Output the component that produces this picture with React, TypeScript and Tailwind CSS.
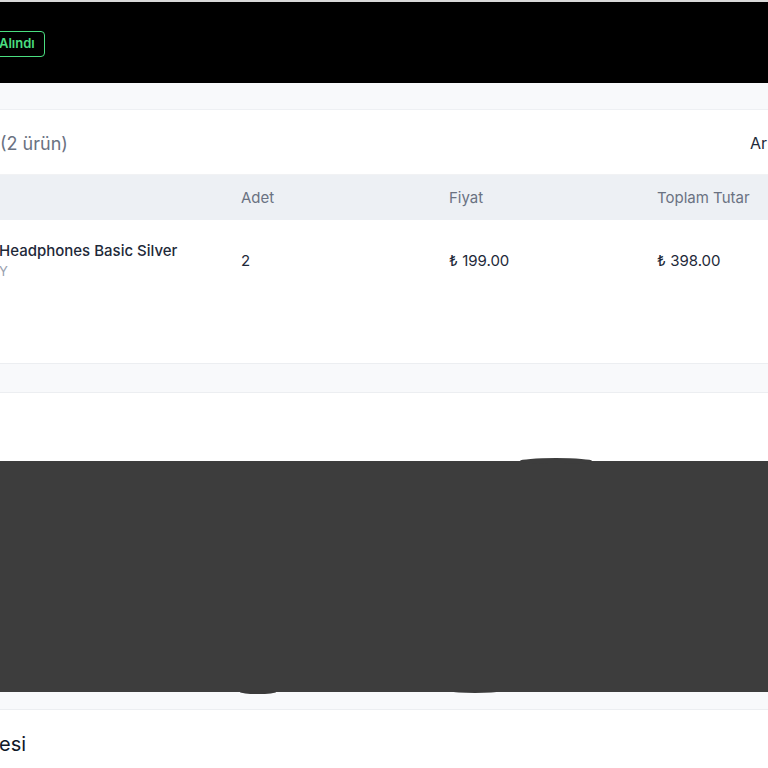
import React from 'react';

const items = [
  { name: 'Headphones Basic Silver', sub: 'Y', qty: 2, price: '₺ 199.00', total: '₺ 398.00' },
];

export default function App() {
  return (
    <div className="w-[768px] h-[768px] overflow-hidden bg-white font-['Inter',sans-serif] text-gray-900">
      {/* Top bar */}
      <div className="h-[2px] bg-[#d9d9d9]" />
      <div className="h-[81px] bg-black flex items-center">
        <span className="-ml-[11px] mt-[2px] px-[9px] h-[26px] flex items-center rounded-[4px] border border-[#4ade80] text-[13px] font-semibold text-[#4ade80]">
          Alındı
        </span>
      </div>

      <div className="h-[27px] bg-[#f8f9fb] border-b border-[#eef0f3]" />

      {/* Products card */}
      <div className="h-[65px] flex items-center justify-between border-b border-[#f1f2f4] pt-[2px]">
        <span className="text-[18px] text-gray-500">(2 ürün)</span>
        <span className="text-[16px] text-gray-800 pr-[1px]">Ar</span>
      </div>

      <div className="grid grid-cols-[241px_208px_208px_1fr] h-[45px] items-center bg-[#edf0f4] text-[15px] text-gray-500 pt-[2px]">
        <div />
        <div>Adet</div>
        <div>Fiyat</div>
        <div className="whitespace-nowrap">Toplam Tutar</div>
      </div>

      <div className="h-[143px]">
        {items.map((item) => (
          <div key={item.name} className="grid grid-cols-[241px_208px_208px_1fr] items-center pt-[21px] text-[15px]">
            <div className="-ml-[1px] leading-[20px]">
              <div className="font-medium text-gray-800">{item.name}</div>
              <div className="text-[13px] text-gray-400 leading-[20px]">{item.sub}</div>
            </div>
            <div className="text-gray-800">{item.qty}</div>
            <div className="text-gray-800">{item.price}</div>
            <div className="text-gray-800">{item.total}</div>
          </div>
        ))}
      </div>

      <div className="h-[30px] bg-[#f8f9fb] border-y border-[#eceef1]" />

      <div className="h-[68px] bg-white" />

      {/* Redacted block */}
      <div className="relative h-[231px] bg-[#3d3d3d]">
        <div className="absolute left-[520px] -top-[3px] w-[72px] h-[6px] rounded-[50%] bg-[#3d3d3d]" />
        <div className="absolute left-[240px] -bottom-[2px] w-[36px] h-[4px] rounded-[50%] bg-[#3a3a3a]" />
        <div className="absolute left-[452px] -bottom-[1px] w-[46px] h-[3px] rounded-[50%] bg-[#3a3a3a]" />
      </div>

      <div className="h-[18px] bg-[#f8f9fb] border-b border-[#eceef1]" />

      <div className="h-[58px] flex items-center pt-[10px]">
        <span className="-ml-[1px] text-[20px] text-gray-900">esi</span>
      </div>
    </div>
  );
}
